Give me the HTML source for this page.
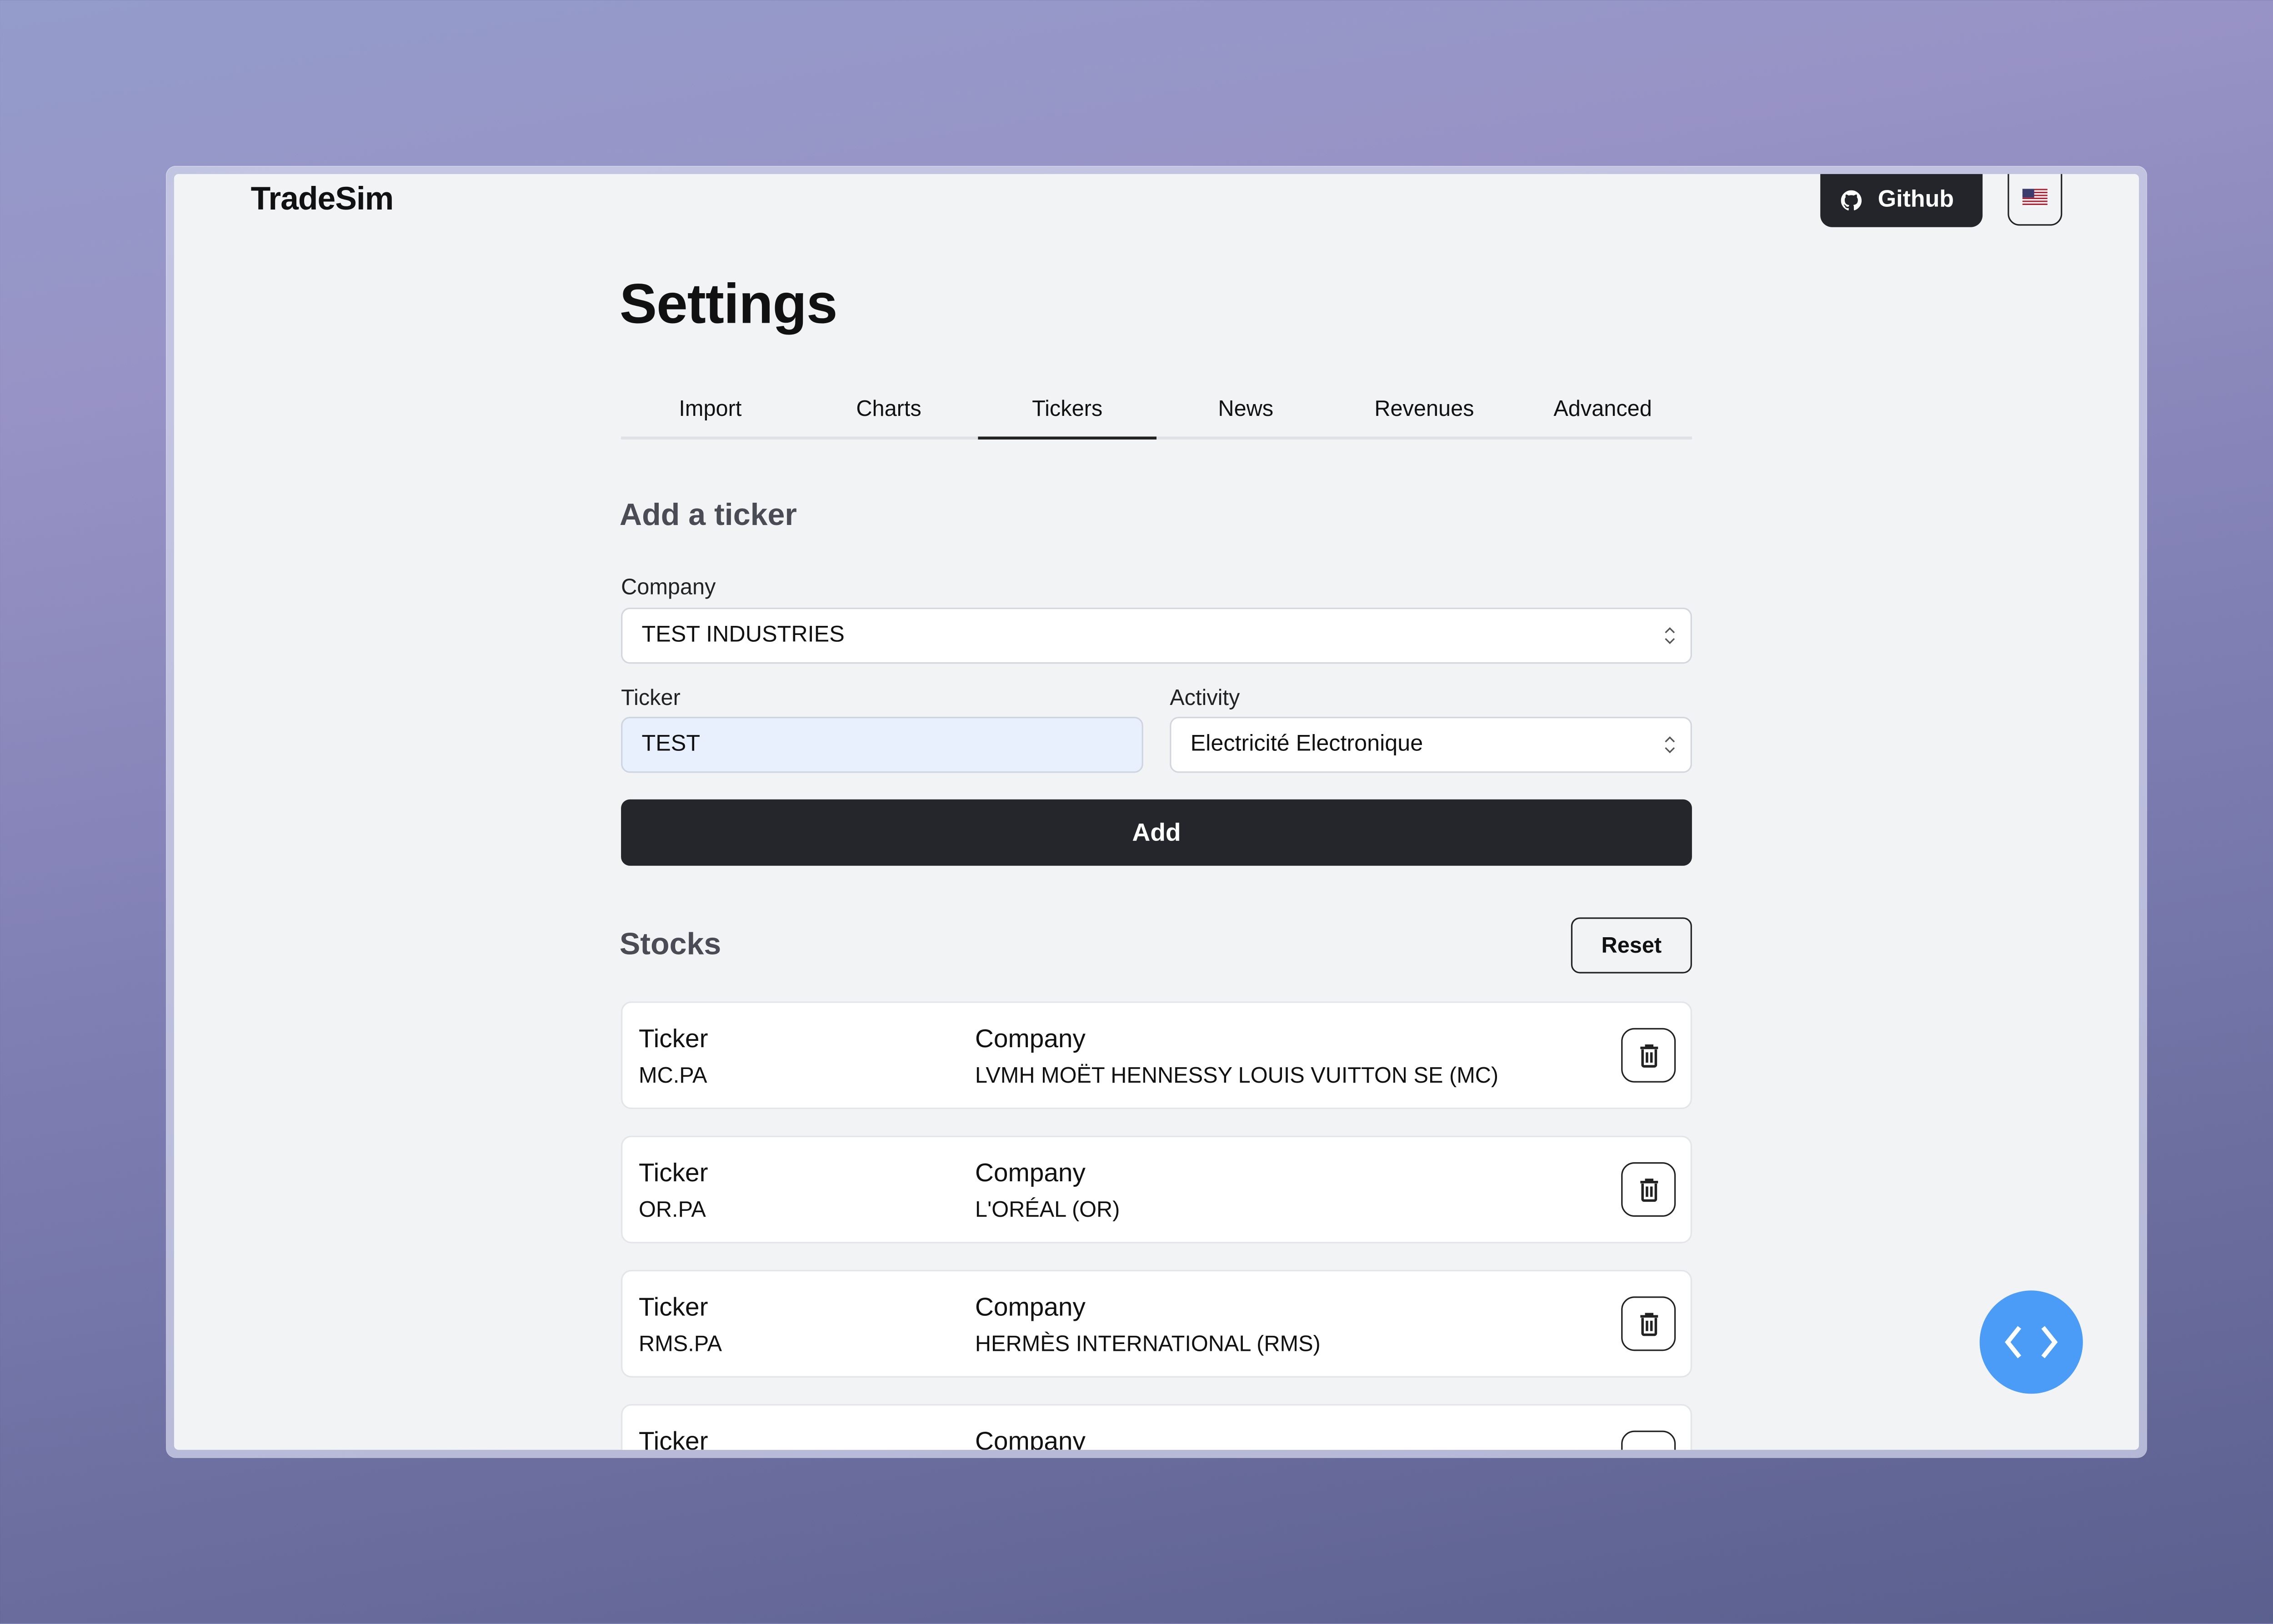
<!DOCTYPE html>
<html><head><meta charset="utf-8"><style>
*{box-sizing:border-box;margin:0;padding:0}
html,body{width:5088px;height:3572px;overflow:hidden}
body{background:linear-gradient(170deg,#939cca 0%,#9893c6 20%,#7c7cb0 55%,#5a5f8e 100%);font-family:"Liberation Sans",Arial,sans-serif;color:#111}
#w{position:absolute;left:0;top:0;width:1568px;height:1101px;transform:scale(3.244898);transform-origin:0 0}
.a{position:absolute}
#win{left:113px;top:113px;width:1342px;height:875px;border-radius:6px;background:rgba(210,212,235,.75);box-shadow:0 0 0 .5px rgba(255,255,255,.6)}
#in{left:118px;top:118px;width:1332px;height:865px;background:#f2f3f5;border-radius:3px;overflow:hidden}
.lbl{font-size:15px;color:#222}
.box{background:#fff;border:1px solid #d3d6dc;border-radius:6px;font-size:15.5px;padding-left:13px;display:flex;align-items:center}
.chev{position:absolute;right:10px;top:50%;margin-top:-7px}
.card{position:absolute;left:303px;width:726px;height:73px;background:#fff;border:1.5px solid #e3e5e9;border-radius:7px}
.card .t{position:absolute;font-size:17.5px;top:14px}
.card .v{position:absolute;font-size:15px;top:41px}
.tr{position:absolute;left:677px;top:17px;width:37px;height:37px;border:1.5px solid #222;border-radius:9px;display:flex;align-items:center;justify-content:center}
.tab{position:absolute;top:0;width:121px;text-align:center;font-size:15px;color:#111}
</style></head><body><div id="w">
<div class="a" id="win"></div>
<div class="a" id="in">
 <div class="a" style="left:52px;top:4px;font-size:22px;font-weight:bold;letter-spacing:-.3px">TradeSim</div>
 <div class="a" style="left:1116px;top:-8px;width:110px;height:44px;background:#24252a;border-radius:8px;color:#fff;font-weight:bold;font-size:16px;display:flex;align-items:center;padding-left:14px;padding-top:8px">
  <svg width="14" height="14" viewBox="0 0 16 16" style="margin-right:11px"><path fill="#fff" d="M8 0C3.6 0 0 3.6 0 8c0 3.5 2.3 6.5 5.5 7.6.4.1.5-.2.5-.4v-1.4c-2.2.5-2.7-1-2.7-1-.4-.9-.9-1.2-.9-1.2-.7-.5.1-.5.1-.5.8.1 1.2.8 1.2.8.7 1.2 1.9.9 2.3.7.1-.5.3-.9.5-1.1-1.8-.2-3.6-.9-3.6-4 0-.9.3-1.6.8-2.1-.1-.2-.4-1 .1-2.1 0 0 .7-.2 2.2.8.6-.2 1.3-.3 2-.3s1.4.1 2 .3c1.5-1 2.2-.8 2.2-.8.4 1.1.2 1.9.1 2.1.5.6.8 1.3.8 2.1 0 3.1-1.9 3.7-3.6 3.9.3.3.5.8.5 1.5v2.2c0 .2.1.5.6.4C13.7 14.5 16 11.5 16 8c0-4.4-3.6-8-8-8z"/></svg>Github</div>
 <div class="a" style="left:1243px;top:-8px;width:37px;height:43px;border:1.3px solid #222;border-radius:8px"></div>
 <svg class="a" style="left:1253px;top:10px" width="17" height="12" viewBox="0 0 17 12"><rect width="17" height="12" rx="1.5" fill="#fff"/><g fill="#b22234"><rect y="0" width="17" height="1"/><rect y="2" width="17" height="1"/><rect y="4" width="17" height="1"/><rect y="6" width="17" height="1"/><rect y="8" width="17" height="1"/><rect y="10" width="17" height="1"/></g><rect width="8" height="6" fill="#3c3b6e"/></svg>

 <div class="a" style="left:302px;top:68px;font-size:38px;font-weight:bold;letter-spacing:-.3px">Settings</div>
 <div class="a" style="left:303px;top:151px;width:726px;height:30px">
  <div class="tab" style="left:0">Import</div><div class="tab" style="left:121px">Charts</div><div class="tab" style="left:242px">Tickers</div><div class="tab" style="left:363px">News</div><div class="tab" style="left:484px">Revenues</div><div class="tab" style="left:605px">Advanced</div>
  <div class="a" style="left:0;top:27px;width:726px;height:2px;background:#dfe1e5"></div>
  <div class="a" style="left:242px;top:27px;width:121px;height:2px;background:#222"></div>
 </div>
 <div class="a" style="left:302px;top:220px;font-size:21px;font-weight:bold;color:#4a4c55">Add a ticker</div>
 <div class="a lbl" style="left:303px;top:272px">Company</div>
 <div class="a box" style="left:303px;top:294px;width:726px;height:38px">TEST INDUSTRIES<svg class="chev" width="8" height="14" viewBox="0 0 8 14"><path d="M1 5l3-3 3 3M1 9l3 3 3-3" fill="none" stroke="#555" stroke-width="1"/></svg></div>
 <div class="a lbl" style="left:303px;top:347px">Ticker</div>
 <div class="a lbl" style="left:675px;top:347px">Activity</div>
 <div class="a box" style="left:303px;top:368px;width:354px;height:38px;background:#e8f0fe;border-color:#cfd5e0">TEST</div>
 <div class="a box" style="left:675px;top:368px;width:354px;height:38px">Electricité Electronique<svg class="chev" width="8" height="14" viewBox="0 0 8 14"><path d="M1 5l3-3 3 3M1 9l3 3 3-3" fill="none" stroke="#555" stroke-width="1"/></svg></div>
 <div class="a" style="left:303px;top:424px;width:726px;height:45px;background:#25262b;border-radius:6px;color:#fff;font-weight:bold;font-size:17px;display:flex;align-items:center;justify-content:center">Add</div>
 <div class="a" style="left:302px;top:511px;font-size:21px;font-weight:bold;color:#4a4c55">Stocks</div>
 <div class="a" style="left:947px;top:504px;width:82px;height:38px;border:1.3px solid #222;border-radius:6px;font-weight:bold;font-size:15px;display:flex;align-items:center;justify-content:center">Reset</div>

 <div class="card" style="top:561px"><div class="t" style="left:11px">Ticker</div><div class="v" style="left:11px">MC.PA</div><div class="t" style="left:239px">Company</div><div class="v" style="left:239px">LVMH MOËT HENNESSY LOUIS VUITTON SE (MC)</div><div class="tr"><svg width="14" height="16" viewBox="0 0 14 16"><path d="M1 2.5h12M5 2.5V1h4v1.5M2.5 3.5v10.5a1 1 0 0 0 1 1h7a1 1 0 0 0 1-1V3.5M5.5 5.5v7M8.5 5.5v7" fill="none" stroke="#222" stroke-width="1.7"/></svg></div></div>
 <div class="card" style="top:652px"><div class="t" style="left:11px">Ticker</div><div class="v" style="left:11px">OR.PA</div><div class="t" style="left:239px">Company</div><div class="v" style="left:239px">L'ORÉAL (OR)</div><div class="tr"><svg width="14" height="16" viewBox="0 0 14 16"><path d="M1 2.5h12M5 2.5V1h4v1.5M2.5 3.5v10.5a1 1 0 0 0 1 1h7a1 1 0 0 0 1-1V3.5M5.5 5.5v7M8.5 5.5v7" fill="none" stroke="#222" stroke-width="1.7"/></svg></div></div>
 <div class="card" style="top:743px"><div class="t" style="left:11px">Ticker</div><div class="v" style="left:11px">RMS.PA</div><div class="t" style="left:239px">Company</div><div class="v" style="left:239px">HERMÈS INTERNATIONAL (RMS)</div><div class="tr"><svg width="14" height="16" viewBox="0 0 14 16"><path d="M1 2.5h12M5 2.5V1h4v1.5M2.5 3.5v10.5a1 1 0 0 0 1 1h7a1 1 0 0 0 1-1V3.5M5.5 5.5v7M8.5 5.5v7" fill="none" stroke="#222" stroke-width="1.7"/></svg></div></div>
 <div class="card" style="top:834px"><div class="t" style="left:11px">Ticker</div><div class="t" style="left:239px">Company</div><div class="tr"></div></div>

 <div class="a" style="left:1224px;top:757px;width:70px;height:70px;border-radius:50%;background:#4a9cf6"></div>
 <svg class="a" style="left:1224px;top:757px" width="70" height="70" viewBox="0 0 70 70"><path d="M27 25l-8 10 8 10M43 25l8 10-8 10" fill="none" stroke="#fff" stroke-width="3"/></svg>
</div>
</div></body></html>
